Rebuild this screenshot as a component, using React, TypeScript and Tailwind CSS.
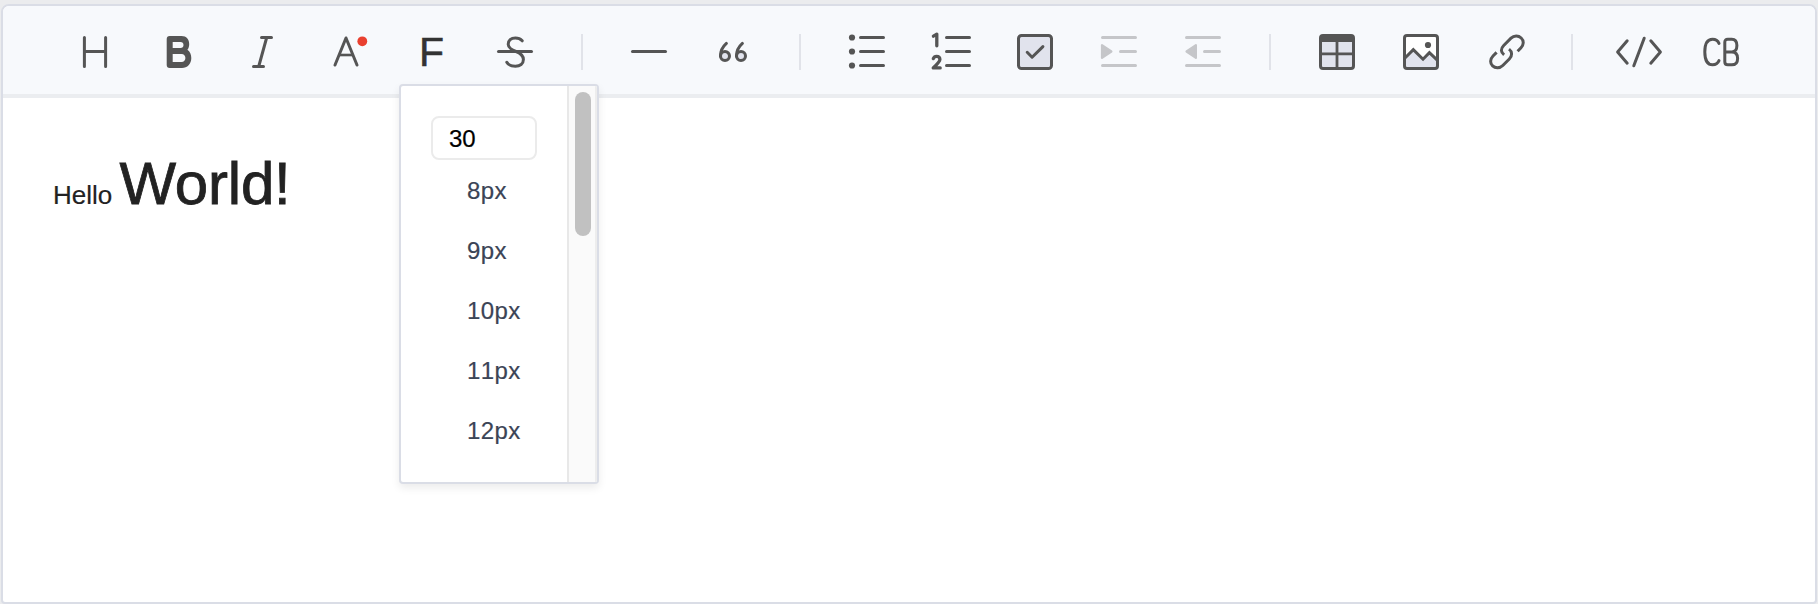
import type { ReactNode } from "react";

function Icon({ children, className = "text-[#555555]" }: { children: ReactNode; className?: string }) {
  return (
    <button className="block h-[88px] w-[84px] shrink-0">
      <svg
        viewBox="-42 -46 84 88"
        className={`block h-[88px] w-[84px] ${className}`}
        fill="none"
        stroke="currentColor"
        strokeWidth="3"
        strokeLinecap="round"
        strokeLinejoin="round"
      >
        {children}
      </svg>
    </button>
  );
}

function Divider() {
  return (
    <div className="flex h-[88px] w-[50px] shrink-0 justify-center pt-7">
      <div className="h-9 w-0.5 bg-[#e1e3e9]" />
    </div>
  );
}

function Toolbar() {
  return (
    <div className="flex h-[92px] shrink-0 rounded-t-md border-b-4 border-[#ebedf0] bg-[#f7f9fc] pl-[50px]">
      <Icon>
        <path d="M-10.6 -14.5V14.5M10.6 -14.5V14.5M-10.6 -0.5H10.6" />
      </Icon>
      <Icon>
        <path
          d="M-9.3 -16H2.5C7.5 -16 10.2 -12.5 10.2 -8C10.2 -5.6 9.6 -3.6 8.4 -2.2C11 -0.4 12.3 2.5 12.3 6C12.3 12 8.3 16 3 16H-9.3A3 3 0 0 1 -12.3 13V-13A3 3 0 0 1 -9.3 -16ZM-6.3 -10V-4H1.5C3.4 -4 4.5 -5.2 4.5 -7S3.4 -10 1.5 -10ZM-6.3 2V10H2.5C5 10 6.4 8.3 6.4 6S5 2 2.5 2Z"
          fill="currentColor"
          fillRule="evenodd"
          stroke="none"
        />
      </Icon>
      <Icon>
        <path d="M-1.5 -14.5H8.5M-9.5 14.5H0.5M3.7 -14.5L-4.3 14.5" />
      </Icon>
      <Icon>
        <path d="M-12 13L-1 -14L10 13" />
        <path d="M-8 3H6" strokeWidth="2.6" strokeLinecap="butt" />
        <circle cx="15.3" cy="-10.7" r="4.9" fill="#e9402f" stroke="none" />
      </Icon>
      <button className="flex h-[88px] w-[84px] shrink-0 items-start pl-[30px] pt-[23px] font-['Liberation_Sans',Arial,sans-serif] text-[41px] leading-[46px] text-[#333333] [-webkit-text-stroke:0.5px_#333333]">
        F
      </button>
      <Icon>
        <path d="M-16.5 -0.5H16.5" />
        <path d="M7.2 -11.2C5.2 -13.4 2.8 -14 0.4 -14C-4 -14 -6.8 -11.6 -6.8 -7.8C-6.8 -3.6 -3 -2 1 -0.5C5.4 1.2 8.4 3.2 8.4 7.6C8.4 12 5 14.2 0.4 14.2C-3.6 14.2 -6.6 13.2 -8.2 10.2" />
      </Icon>
      <Divider />
      <Icon>
        <path d="M-16.5 -0.5H16.5" />
      </Icon>
      <Icon>
        <circle cx="-8" cy="4.1" r="4.5" fill="#e1e3ed" />
        <circle cx="8" cy="4.1" r="4.5" fill="#e1e3ed" />
        <path d="M-12.5 4C-12.5 -1 -10.3 -5.3 -6.6 -8.6M3.5 4C3.5 -1 5.7 -5.3 9.4 -8.6" />
      </Icon>
      <Divider />
      <Icon>
        <path d="M-6.5 -14.5H16.5M-6.5 -0.5H16.5M-6.5 13.5H16.5" />
        <g fill="currentColor" stroke="none">
          <circle cx="-15" cy="-14.5" r="3.1" />
          <circle cx="-15" cy="-0.5" r="3.1" />
          <circle cx="-15" cy="13.5" r="3.1" />
        </g>
      </Icon>
      <Icon>
        <path d="M-4.5 -14.5H18.5M-4.5 -0.5H18.5M-4.5 13.5H18.5" />
        <path d="M-17.6 -15.8L-14.2 -17.8V-6.2M-17.7 6.6C-17 4.8 -15.8 4.3 -14.5 4.3C-12.4 4.3 -11.1 5.6 -11.1 7.4C-11.1 9.6 -13.2 11.6 -17.8 15.9H-10.8" strokeWidth="3.3" />
      </Icon>
      <Icon>
        <rect x="-16.5" y="-16.5" width="33" height="33" rx="3" fill="#e1e3ed" />
        <path d="M-7.8 0.3L-2.9 5.2L7.9 -5.4" />
      </Icon>
      <Icon className="text-[#c5c6c9]">
        <path d="M-16.5 -14.5H16.5M1.5 -0.5H16.5M-16.5 13.5H16.5" />
        <path d="M-17 -6.9V5.9L-7.6 -0.5Z" fill="currentColor" strokeWidth="2.2" />
      </Icon>
      <Icon className="text-[#c5c6c9]">
        <path d="M-16.5 -14.5H16.5M1.5 -0.5H16.5M-16.5 13.5H16.5" />
        <path d="M-7.1 -6.9V5.9L-16.5 -0.5Z" fill="currentColor" strokeWidth="2.2" />
      </Icon>
      <Divider />
      <Icon>
        <rect x="-16.5" y="-16.5" width="33" height="33" rx="2.5" fill="#e1e3ed" />
        <path d="M-16 -16H16V-10H-16Z" fill="currentColor" stroke="none" />
        <path d="M0 -10V16M-16 1.8H16" strokeWidth="2.8" />
      </Icon>
      <Icon>
        <rect x="-16.5" y="-16.5" width="33" height="33" rx="2.5" fill="#ffffff" stroke="none" />
        <path d="M-16.5 6.5L-7.7 -2.3L2 7.2L8.4 0.6L16.5 8.4V16.5H-16.5Z" fill="#e1e3ed" stroke="none" />
        <path d="M-16.5 6.5L-7.7 -2.3L2 7.2L8.4 0.6L16.5 8.4" strokeLinejoin="miter" />
        <rect x="-16.5" y="-16.5" width="33" height="33" rx="2.5" />
        <circle cx="7" cy="-7" r="3.1" fill="currentColor" stroke="none" />
      </Icon>
      <Icon>
        <path
          d="M12.6 -0.7L15.8 -4C19 -7.3 19 -11.4 16.2 -14C13.4 -16.7 9 -16.7 6 -13.8L-1.3 -6.5C-4.6 -3.2 -4.3 0.2 -0.9 2.9M-8.4 0.4L-12 4C-15.2 7.3 -15 11.4 -12.4 13.9C-9.7 16.5 -5.2 16.5 -2.2 13.5L4.3 7C7.5 3.8 7.3 -0.4 4 -2.9"
          strokeLinecap="butt"
        />
      </Icon>
      <Divider />
      <Icon>
        <path d="M-11.8 -11.2L-21.4 0L-11.8 11.2M5.2 -13.8L-5.2 13.8M11.8 -11.2L21.4 0L11.8 11.2" />
      </Icon>
      <Icon>
        <path d="M-4 -8.6C-5.2 -11.4 -7.8 -12.8 -10.4 -12.8C-15.6 -12.8 -18.2 -7.6 -18.2 0S-15.6 12.8 -10.4 12.8C-7.8 12.8 -5.2 11.4 -4 8.6M1.8 0H9M1.8 -9.8V9.8C1.8 11.8 2.8 12.8 4.8 12.8H8.8C12.6 12.8 14.6 10.3 14.6 6.4S12.6 0 8.8 0C12.2 0 13.9 -2.5 13.9 -6.4S12.2 -12.8 8.8 -12.8H4.8C2.8 -12.8 1.8 -11.8 1.8 -9.8Z" />
      </Icon>
    </div>
  );
}

const sizes = ["8px", "9px", "10px", "11px", "12px", "13px"];

function FontSizePopup() {
  return (
    <div className="absolute left-[399px] top-[84px] flex h-[400px] w-[200px] overflow-hidden rounded border-2 border-[#dadde6] bg-white shadow-[0_4px_8px_rgba(0,0,0,0.08)]">
      <div className="flex-1 pl-[30px] pt-[30px]">
        <div className="h-11 w-[106px] rounded-lg border-2 border-[#ebebeb] pl-4 pt-px text-2xl leading-[40px] text-black [-webkit-text-stroke:0.2px_#000000]">
          30
        </div>
        <ul className="pl-9 pt-px text-[24px] leading-[60px] tracking-[0.4px] text-[#3b4456] [-webkit-text-stroke:0.2px_#3b4456] [font-kerning:none]">
          {sizes.map((size) => (
            <li key={size} className="h-[60px]">
              {size}
            </li>
          ))}
        </ul>
      </div>
      <div className="flex w-[30px] border-x-2 border-l-[#e8e8e8] border-r-[#ededed] bg-[#fafafa] pl-1.5 pt-1.5">
        <div className="h-36 w-4 rounded-full bg-[#c1c1c1]" />
      </div>
    </div>
  );
}

export default function App() {
  return (
    <div className="relative h-[604px] w-[1818px] overflow-hidden bg-[#ebecee] pl-px pr-px pt-1 font-['Liberation_Sans',Arial,sans-serif]">
      <div className="flex h-[600px] flex-col rounded-t-lg rounded-b border-2 border-[#dadde6] bg-white">
        <Toolbar />
        <div className="flex-1 pl-[50px] pt-[50px] text-[26px] leading-[71px] text-[#222222] [-webkit-text-stroke:0.2px_#222222]">
          <p>
            Hello <span className="text-[60px] tracking-[-0.2px] [-webkit-text-stroke:0.8px_#222222]">World!</span>
          </p>
        </div>
      </div>
      <FontSizePopup />
    </div>
  );
}
